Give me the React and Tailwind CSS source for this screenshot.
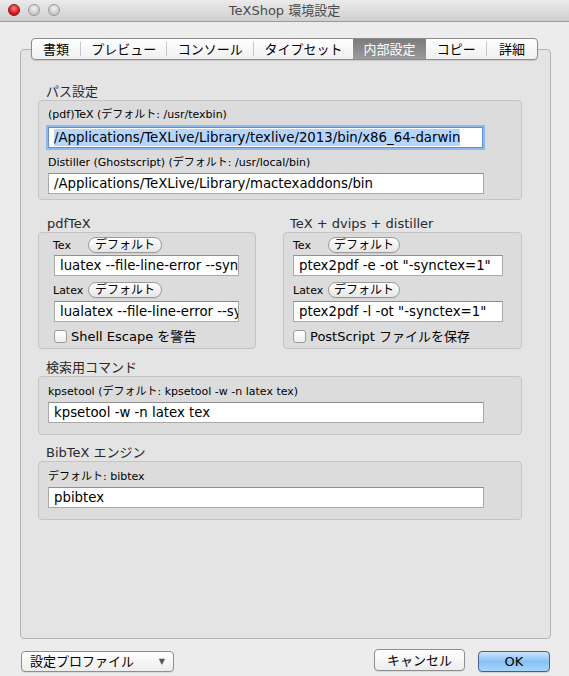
import React from "react";

const FONT = "font-['DejaVu_Sans','Noto_Sans_CJK_JP',sans-serif]";

function Field({ w, children, focused }) {
  return (
    <div
      className={
        "h-[21px] bg-white flex items-center pl-[5px] overflow-hidden whitespace-nowrap text-[13.3px] text-black " +
        (focused
          ? "border border-[#5f8fd0] shadow-[0_0_0_2px_#8fb8ee]"
          : "border border-[#a9a9a9] border-t-[#8f8f8f]")
      }
      style={{ width: w }}
    >
      {children}
    </div>
  );
}

function DefBtn({ w }) {
  return (
    <div
      className="h-[16px] rounded-full border border-[#9c9c9c] bg-gradient-to-b from-white to-[#e6e6e6] flex items-center justify-center text-[12px] text-black leading-none shadow-[0_1px_0_rgba(0,0,0,0.06)]"
      style={{ width: w }}
    >
      デフォルト
    </div>
  );
}

function Check({ label }) {
  return (
    <div className="flex items-center h-[16px] gap-[4px]">
      <div className="w-[13px] h-[13px] rounded-[3px] border border-[#9a9a9a] bg-gradient-to-b from-white to-[#ededed]" />
      <span className="text-[13px] text-black leading-none">{label}</span>
    </div>
  );
}

function Group({ children, className = "" }) {
  return (
    <div className={"border border-[#c4c4c4] rounded-[4px] bg-[#dcdcdc] " + className}>
      {children}
    </div>
  );
}

const tabs = [
  ["書類", 48],
  ["プレビュー", 87],
  ["コンソール", 87],
  ["タイプセット", 100],
  ["内部設定", 74],
  ["コピー", 60],
  ["詳細", 51],
];

export default function App() {
  return (
    <div className={"w-[569px] h-[676px] bg-[#ececec] overflow-hidden " + FONT}>
      {/* title bar */}
      <div className="h-[22px] relative flex items-center justify-center bg-gradient-to-b from-[#ebebeb] to-[#cfcfcf] border-b border-[#999]">
        <div className="absolute left-[8px] top-[4px] flex gap-[8px]">
          <div className="w-[12px] h-[12px] rounded-full bg-[radial-gradient(circle_at_50%_35%,#ff8a8a,#e0161c_60%,#9b0a0e)] border border-[#8a1a1a]" />
          <div className="w-[12px] h-[12px] rounded-full bg-[radial-gradient(circle_at_50%_35%,#f4f4f4,#c9c9c9_65%,#a9a9a9)] border border-[#9a9a9a]" />
          <div className="w-[12px] h-[12px] rounded-full bg-[radial-gradient(circle_at_50%_35%,#f4f4f4,#c9c9c9_65%,#a9a9a9)] border border-[#9a9a9a]" />
        </div>
        <span className="text-[13px] text-[#4a4a4a] leading-none">TeXShop 環境設定</span>
      </div>

      {/* tabs */}
      <div className="relative z-10 mt-[16px] flex justify-center">
        <div className="flex h-[22px] w-[507px] rounded-[4px] border border-[#8c8c8c] bg-gradient-to-b from-white to-[#f0f0f0] overflow-hidden shadow-[0_1px_1px_rgba(0,0,0,0.12)]">
          {tabs.map(([t, w], i) => {
            const sel = t === "内部設定";
            const prevSel = i > 0 && tabs[i - 1][0] === "内部設定";
            return (
              <div key={t} className="flex items-center" style={{ width: w }}>
                {i > 0 && !sel && !prevSel && <div className="w-px h-[14px] bg-[#c6c6c6]" />}
                <div
                  className={
                    "flex-1 h-full flex items-center justify-center text-[13px] leading-none " +
                    (sel ? "bg-gradient-to-b from-[#7c7c7c] to-[#9a9a9a] text-white" : "text-black")
                  }
                >
                  {t}
                </div>
              </div>
            );
          })}
        </div>
      </div>

      {/* tab content box */}
      <div className="-mt-[11px] ml-[20px] w-[531px] h-[590px] border border-[#b3b3b3] rounded-[4px] bg-[#e4e4e4] pt-[34px] pl-[17px]">
        {/* パス設定 */}
        <div className="pl-[8px] h-[16px] text-[13px] leading-[16px] text-[#2a2a2a]">パス設定</div>
        <Group className="w-[484px] pt-[7px] pb-[5px] pl-[9px]">
          <div className="text-[11px] leading-[14px] text-black">(pdf)TeX (デフォルト: /usr/texbin)</div>
          <div className="mt-[5px]">
            <Field w={435} focused>
              <span className="bg-[#b5d5fd] leading-[17px]">/Applications/TeXLive/Library/texlive/2013/bin/x86_64-darwin</span>
            </Field>
          </div>
          <div className="mt-[8px] text-[11px] leading-[14px] text-black">Distiller (Ghostscript) (デフォルト: /usr/local/bin)</div>
          <div className="mt-[3px]">
            <Field w={436}>/Applications/TeXLive/Library/mactexaddons/bin</Field>
          </div>
        </Group>

        {/* two columns */}
        <div className="mt-[16px] flex gap-[27px]">
          <div>
            <div className="pl-[9px] h-[16px] text-[13px] leading-[16px] text-[#2a2a2a]">pdfTeX</div>
            <Group className="w-[218px] h-[117px] pt-[4px] pl-[14px]">
              <div className="flex items-center h-[16px]">
                <span className="w-[35px] text-[11px] text-black leading-none">Tex</span>
                <DefBtn w={74} />
              </div>
              <div className="mt-[2px] ml-[1px]">
                <Field w={185}>luatex --file-line-error --synctex=1</Field>
              </div>
              <div className="mt-[6px] flex items-center h-[16px]">
                <span className="w-[35px] text-[11px] text-black leading-none">Latex</span>
                <DefBtn w={74} />
              </div>
              <div className="mt-[3px] ml-[1px]">
                <Field w={185}>lualatex --file-line-error --synctex=1</Field>
              </div>
              <div className="mt-[6px] ml-[1px]">
                <Check label="Shell Escape を警告" />
              </div>
            </Group>
          </div>
          <div>
            <div className="pl-[7px] h-[16px] text-[13px] leading-[16px] text-[#2a2a2a]">TeX + dvips + distiller</div>
            <Group className="w-[239px] h-[117px] pt-[4px] pl-[9px]">
              <div className="flex items-center h-[16px]">
                <span className="w-[35px] text-[11px] text-black leading-none">Tex</span>
                <DefBtn w={72} />
              </div>
              <div className="mt-[2px]">
                <Field w={210}>ptex2pdf -e -ot "-synctex=1"</Field>
              </div>
              <div className="mt-[6px] flex items-center h-[16px]">
                <span className="w-[35px] text-[11px] text-black leading-none">Latex</span>
                <DefBtn w={72} />
              </div>
              <div className="mt-[3px]">
                <Field w={210}>ptex2pdf -l -ot "-synctex=1"</Field>
              </div>
              <div className="mt-[6px]">
                <Check label="PostScript ファイルを保存" />
              </div>
            </Group>
          </div>
        </div>

        {/* 検索用コマンド */}
        <div className="mt-[10px] pl-[8px] h-[17px] text-[13px] leading-[17px] text-[#2a2a2a]">検索用コマンド</div>
        <Group className="w-[484px] pt-[8px] pb-[11px] pl-[9px]">
          <div className="text-[11px] leading-[14px] text-black">kpsetool (デフォルト: kpsetool -w -n latex tex)</div>
          <div className="mt-[3px]">
            <Field w={436}>kpsetool -w -n latex tex</Field>
          </div>
        </Group>

        {/* BibTeX */}
        <div className="mt-[9px] pl-[8px] h-[17px] text-[13px] leading-[17px] text-[#2a2a2a]">BibTeX エンジン</div>
        <Group className="w-[484px] pt-[8px] pb-[11px] pl-[9px]">
          <div className="text-[11px] leading-[14px] text-black">デフォルト: bibtex</div>
          <div className="mt-[3px]">
            <Field w={436}>pbibtex</Field>
          </div>
        </Group>
      </div>

      {/* bottom buttons */}
      <div className="mt-[12px] flex items-center pl-[21px]">
        <div className="w-[153px] h-[21px] rounded-[4px] border border-[#8e8e8e] bg-gradient-to-b from-white to-[#ededed] flex items-center justify-between pl-[8px] pr-[8px] shadow-[0_1px_0_rgba(0,0,0,0.08)]">
          <span className="text-[13px] text-black leading-none">設定プロファイル</span>
          <span className="text-[8px] text-[#555] leading-none">▼</span>
        </div>
        <div className="ml-[200px] -mt-[3px] w-[91px] h-[22px] rounded-[4px] border border-[#8e8e8e] bg-gradient-to-b from-white to-[#ededed] flex items-center justify-center text-[13px] text-black leading-none shadow-[0_1px_0_rgba(0,0,0,0.08)]">
          キャンセル
        </div>
        <div className="ml-[13px] w-[72px] h-[21px] rounded-[4px] border border-[#4e5a8e] bg-gradient-to-b from-[#cfe5fc] via-[#86c1f6] to-[#a9d5fa] flex items-center justify-center text-[13px] text-black leading-none shadow-[0_1px_0_rgba(0,0,0,0.1)]">
          OK
        </div>
      </div>
    </div>
  );
}
